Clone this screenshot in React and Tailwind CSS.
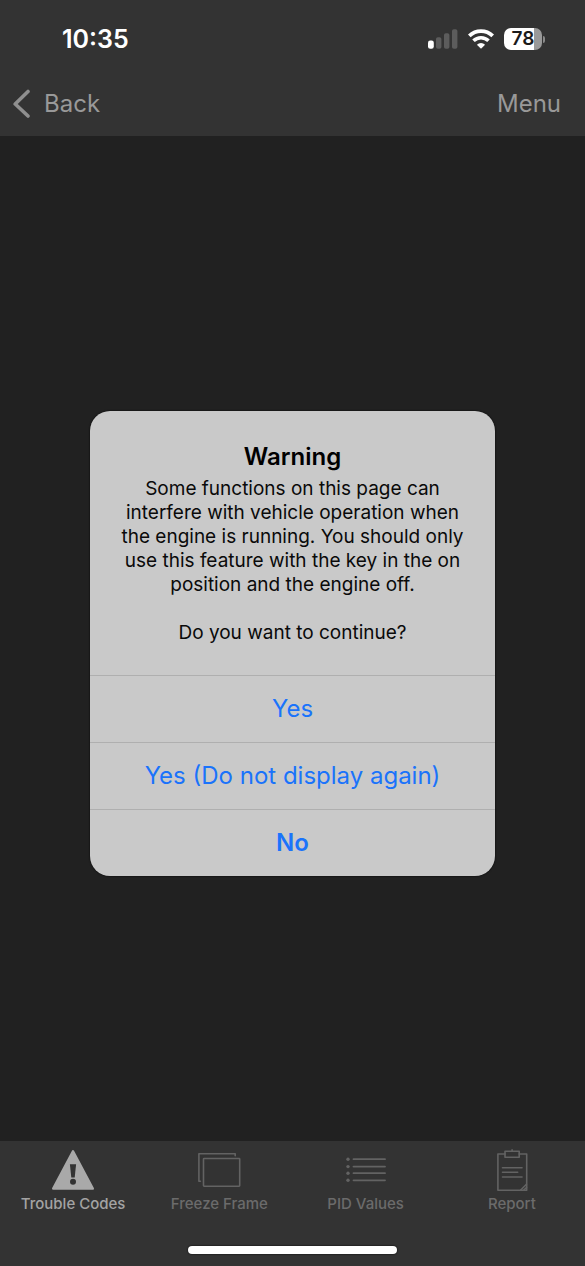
import React, { useState } from "react";

const SignalIcon = () => (
  <svg width="30" height="20" viewBox="0 0 30 20" aria-hidden="true">
    <rect x="0" y="11.5" width="5.8" height="8.3" rx="2.2" fill="#fff" />
    <rect x="8" y="8.3" width="5.4" height="11.5" rx="1.8" fill="#5c5c5c" />
    <rect x="16" y="4.3" width="5.4" height="15.5" rx="1.8" fill="#5c5c5c" />
    <rect x="24" y="0.3" width="5.4" height="19.5" rx="1.8" fill="#5c5c5c" />
  </svg>
);

const WifiIcon = () => (
  <svg width="26" height="20" viewBox="0 0 26 20" fill="none" aria-hidden="true">
    <path d="M1.3 6.9a16.6 16.6 0 0 1 23.4 0" stroke="#fff" strokeWidth="3.8" />
    <path d="M5.5 11.8a10.7 10.7 0 0 1 15 0" stroke="#fff" strokeWidth="3.6" />
    <path d="M13 19.8l-4.1-4.1a6 6 0 0 1 8.2 0z" fill="#fff" />
  </svg>
);

const BackIcon = () => (
  <svg width="18" height="30" viewBox="0 0 18 30" fill="none" aria-hidden="true">
    <path d="M16 2.5L3.2 15L16 27" stroke="#8f8f8f" strokeWidth="3.6" strokeLinecap="round" strokeLinejoin="round" />
  </svg>
);

const TroubleIcon = () => (
  <svg width="44" height="44" viewBox="0 0 44 44" aria-hidden="true">
    <path d="M22 3.3L41.8 40.6H2.2z" fill="#a9a9a9" stroke="#a9a9a9" strokeWidth="2.4" strokeLinejoin="round" />
    <path d="M18.9 16.2h6.2l-1.4 13.4h-3.4z" fill="#333" />
    <circle cx="22" cy="33.8" r="3" fill="#333" />
  </svg>
);

const FreezeIcon = () => (
  <svg width="44" height="44" viewBox="0 0 44 44" fill="none" stroke="#636363" strokeWidth="1.6" strokeLinecap="round" strokeLinejoin="round" aria-hidden="true">
    <path d="M3.4 33.3H1.9V5.8H38.2V7.8" />
    <rect x="6.5" y="10.5" width="36.2" height="27.7" rx="0.6" />
  </svg>
);

const PidIcon = () => (
  <svg width="44" height="44" viewBox="0 0 44 44" fill="#636363" aria-hidden="true">
    {[11.2, 18.6, 25.2, 32.3].map((y) => (
      <g key={y}>
        <circle cx="4" cy={y} r="1.7" />
        <path d={`M9.5 ${y}H41`} stroke="#636363" strokeWidth="1.8" strokeLinecap="round" />
      </g>
    ))}
  </svg>
);

const ReportIcon = () => (
  <svg width="44" height="44" viewBox="0 0 44 44" fill="none" stroke="#636363" strokeWidth="1.6" strokeLinecap="round" strokeLinejoin="round" aria-hidden="true">
    <path d="M15 6H7.9V42.3H36.7V6H29.2" />
    <path d="M15 3.3h14.2V9.2H15zM22.1 3V1.9" />
    <path d="M12.5 19.7H32M12.5 24.3H27.7M12.5 29H32" />
    <path d="M36.5 36.3L30.7 42M36.5 39.5L33.8 42" />
  </svg>
);

const tabs = [
  { name: "Trouble Codes", Icon: TroubleIcon },
  { name: "Freeze Frame", Icon: FreezeIcon },
  { name: "PID Values", Icon: PidIcon },
  { name: "Report", Icon: ReportIcon },
];

const App = () => {
  const [open, setOpen] = useState(true);
  const [activeTab, setActiveTab] = useState("Trouble Codes");

  const close = () => setOpen(false);

  return (
    <div className="min-h-screen flex flex-col bg-[#212121] font-[Inter,sans-serif]">
      <header className="bg-[#333333] h-[136px]">
        {/* Status bar */}
        <div className="flex items-center justify-between h-[78px] pl-[62px] pr-10">
          <span className="text-[25px] leading-8 font-semibold text-white">10:35</span>
          <div className="flex items-center gap-2.5">
            <SignalIcon />
            <WifiIcon />
            <div className="flex items-center gap-px">
              <div className="flex items-center justify-center w-[38px] h-[22px] rounded-[7px] bg-linear-to-r from-white from-80% to-[#999999] to-80%">
                <span className="text-[19px] leading-5 font-semibold text-[#1a1a1a]">78</span>
              </div>
              <div className="w-[2px] h-[7px] rounded-r-full bg-[#8a8a8a]" />
            </div>
          </div>
        </div>

        <nav className="flex items-center justify-between h-[52px] pl-3 pr-6 text-2xl text-[#999999]">
          <button className="flex items-center gap-3.5">
            <BackIcon />
            Back
          </button>
          <button>Menu</button>
        </nav>
      </header>

      <main className="flex-1 flex items-center justify-center px-4 pt-2.5">
        {open && (
          <div
            role="alertdialog"
            aria-labelledby="warning-title"
            aria-describedby="warning-text"
            className="w-full max-w-[405px] rounded-[20px] overflow-hidden bg-[#c9c9c9] text-center shadow-[0_0_2px_#000000]"
          >
            <div className="px-6 py-[30px]">
              <h1 id="warning-title" className="text-2xl leading-8 font-semibold text-black">
                Warning
              </h1>
              <div id="warning-text" className="mt-1 text-[19px] leading-6 text-[#0a0a0a]">
                <p>
                  Some functions on this page can interfere with vehicle operation when the engine
                  is running. You should only use this feature with the key in the on position and
                  the engine off.
                </p>
                <p className="mt-6">Do you want to continue?</p>
              </div>
            </div>
            <div className="flex flex-col text-2xl text-[#1a73fb]">
              <button onClick={close} className="h-[67px] border-t border-[#afafaf]">
                Yes
              </button>
              <button onClick={close} className="h-[67px] border-t border-[#afafaf]">
                Yes (Do not display again)
              </button>
              <button onClick={close} className="h-[67px] border-t border-[#afafaf] font-semibold">
                No
              </button>
            </div>
          </div>
        )}
      </main>

      <footer className="bg-[#333333] pt-[7px] pb-3">
        <div className="grid grid-cols-4">
          {tabs.map(({ name, Icon }) => (
            <button
              key={name}
              onClick={() => setActiveTab(name)}
              className={`flex flex-col items-center text-[15px] leading-6 font-medium ${
                activeTab === name ? "text-[#a3a3a3]" : "text-[#6b6b6b]"
              }`}
            >
              <Icon />
              {name}
            </button>
          ))}
        </div>
        {/* Home indicator */}
        <div className="mx-auto mt-[30px] w-[209px] h-2 rounded-full bg-white shadow-[0_0_2px_#000000]" />
      </footer>
    </div>
  );
};

export default App;
